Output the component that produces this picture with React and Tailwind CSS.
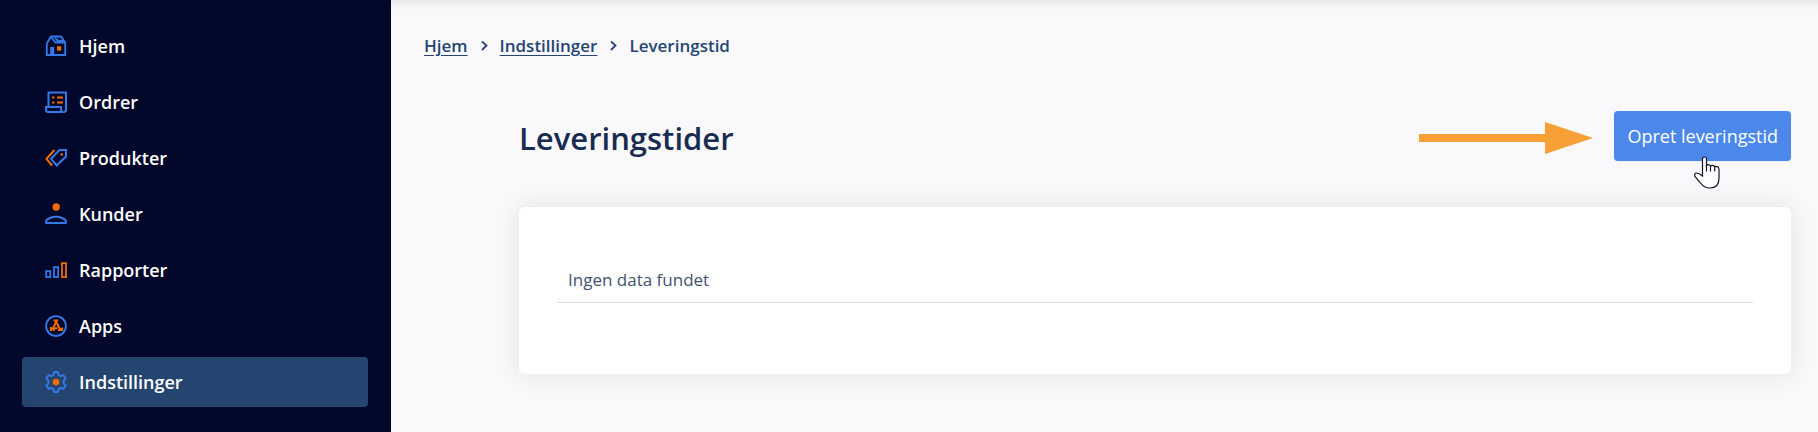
import { Fragment } from "react";

const BLUE = "#3579e8";
const ORANGE = "#f06c00";

function HomeIcon() {
  return (
    <svg width="22" height="22" viewBox="0 0 22 22" fill="none" stroke={BLUE} strokeWidth="1.8">
      <path d="M1.8 8.5V20H20.200V7.500L16 1.500H6L1.800 8.500" />
      <path d="M6 2L10.500 7.500H20M10 2.700L12.600 5.700H18" />
      <path d="M5.2 12H9.200V20H5.200Z" fill={BLUE} stroke="none" />
      <path d="M12 11.200H16.200V15.600H12Z" fill={ORANGE} stroke="none" />
    </svg>
  );
}

function OrdersIcon() {
  return (
    <svg width="22" height="22" viewBox="0 0 22 22" fill="none" stroke={BLUE} strokeWidth="2">
      <path d="M3.500 16V1.500H21V18.500Q21 21 18.500 21" />
      <path d="M1 16H16V18.500Q16 21 18.500 21H3Q1 21 1 18.500Z" />
      <path d="M7 6.500H9.500M12 6.500H18M7 11.500H9.500M12 11.500H18" stroke={ORANGE} strokeWidth="2.200" />
    </svg>
  );
}

function ProductsIcon() {
  return (
    <svg width="22" height="22" viewBox="0 0 22 22" fill="none" strokeWidth="2">
      <path d="M9.500 3L1.500 11.800L7 18.500" stroke={ORANGE} />
      <path d="M21 3H14.500L6 11.800L11.800 18.500L21 9.500Z" stroke={BLUE} />
      <circle cx="16.8" cy="7.5" r="1.3" fill={ORANGE} />
    </svg>
  );
}

function CustomersIcon() {
  return (
    <svg width="22" height="22" viewBox="0 0 22 22" fill="none">
      <circle cx="11.2" cy="4" r="3.7" fill={ORANGE} />
      <path d="M1.200 20V17.500Q5 13.700 11 13.700Q17 13.700 20.800 17.500V20Z" stroke={BLUE} strokeWidth="2" />
    </svg>
  );
}

function ReportsIcon() {
  return (
    <svg width="22" height="22" viewBox="0 0 22 22" fill="none" strokeWidth="1.8">
      <path d="M1.200 12.200H5.300V18.200H1.200Z" stroke={BLUE} />
      <path d="M9 8.200H13.200V18.200H9Z" stroke={BLUE} />
      <path d="M17 4.200H21V18.200H17Z" stroke={ORANGE} />
    </svg>
  );
}

function AppsIcon() {
  return (
    <svg width="22" height="22" viewBox="0 0 22 22" fill="none">
      <circle cx="11" cy="11" r="9.9" stroke={BLUE} strokeWidth="1.8" />
      <g stroke={ORANGE} strokeWidth="2">
        <path d="M12 5L8.500 12.500M8.500 5.500H13M11 7L14 11.500" />
        <path d="M4.800 13.200H12.500M6 12V16M7.500 14.800H10" />
        <path d="M12.500 10.500L16.500 15.500M13 15H17.500M17.200 12.500V15.500" />
      </g>
    </svg>
  );
}

function SettingsIcon() {
  return (
    <svg width="22" height="22" viewBox="0 0 22 22" fill="none">
      <path
        d="M9.200 1H12.800L13.600 3.900L15.600 5L18.500 4.200L20.700 7.500L18.600 9.600V12.400L20.700 14.500L18.500 17.800L15.600 17L13.600 18.100L12.800 21H9.200L8.400 18.100L6.400 17L3.500 17.800L1.300 14.500L3.400 12.400V9.600L1.300 7.500L3.500 4.200L6.400 5L8.400 3.900Z"
        stroke={BLUE}
        strokeWidth="1.9"
        strokeLinejoin="round"
      />
      <circle cx="11" cy="11" r="3.3" fill={ORANGE} />
    </svg>
  );
}

const menu = [
  { label: "Hjem", icon: HomeIcon },
  { label: "Ordrer", icon: OrdersIcon },
  { label: "Produkter", icon: ProductsIcon },
  { label: "Kunder", icon: CustomersIcon },
  { label: "Rapporter", icon: ReportsIcon },
  { label: "Apps", icon: AppsIcon },
  { label: "Indstillinger", icon: SettingsIcon, active: true },
];

const parents = ["Hjem", "Indstillinger"];

export default function App() {
  return (
    <div className="flex min-h-screen bg-[#f9f9fc] font-['Segoe_UI','Open_Sans',sans-serif]">
      <nav className="w-[391px] shrink-0 bg-[#02082b] pl-[22px] pr-[23px] pt-[21px]">
        <ul className="flex flex-col gap-1.5">
          {menu.map(({ label, icon: Icon, active }) => (
            <li key={label}>
              <a
                href="#"
                className={
                  active
                    ? "flex h-[50px] items-center gap-3 rounded bg-[#254571] px-[23px] text-lg font-semibold text-white"
                    : "flex h-[50px] items-center gap-3 rounded px-[23px] text-lg font-semibold text-white"
                }
              >
                <Icon />
                {label}
              </a>
            </li>
          ))}
        </ul>
      </nav>

      <main className="min-w-0 flex-1 shadow-[inset_0_12px_12px_-12px_rgba(0,0,0,0.15)]">
        <nav className="flex h-[91px] items-center gap-3 px-[33px] text-[17px] font-semibold text-[#254573]">
          {parents.map((name) => (
            <Fragment key={name}>
              <a href="#" className="underline underline-offset-3">
                {name}
              </a>
              <svg width="8" height="12" viewBox="0 0 8 12" fill="none" stroke="#254573" strokeWidth="1.8">
                <path d="M2 1.500L6.500 5.500L2 10" />
              </svg>
            </Fragment>
          ))}
          <span>Leveringstid</span>
        </nav>

        <section className="pl-32 pr-[27px] pt-5">
          <div className="flex items-center">
            <h1 className="pt-1 text-[31px] font-semibold text-[#182c50]">Leveringstider</h1>
            <svg className="ml-auto mr-[21px] mt-1" width="174" height="32" viewBox="0 0 174 32" fill="#f89f35">
              <path d="M0 12H126V0L174 16L126 32V20H0Z" />
            </svg>
            <button type="button" className="relative h-[50px] rounded bg-[#4b88e9] px-[13px] text-lg text-white shadow-xs">
              Opret leveringstid
              <svg className="absolute left-20 top-[45px]" width="26" height="33" viewBox="0 0 26 33">
                <path
                  d="M8.500 20V3Q8.500 1 10.500 1Q12.500 1 12.500 3V9.500Q14.500 7.500 16.500 10Q18.500 8.500 20.500 10.500Q25 10 25 13.500V22Q25 32 16 32Q10 32 6.500 27L1 20.500Q0 17 2.500 17Q5 17 8.500 20Z"
                  fill="white"
                  stroke="#12122a"
                  strokeWidth="1.200"
                />
                <path d="M12.500 9V15.500M16.500 10V15.500M20.700 11V15.500" stroke="#12122a" strokeWidth="1.200" />
              </svg>
            </button>
          </div>

          <div className="mt-[45px] rounded-md bg-white px-[38px] pb-[71px] pt-[51px] shadow-[0_0_24px_rgba(0,0,0,0.1)]">
            <table className="w-full border-separate border-spacing-0 text-[17px] text-[#43536f]">
              <tbody>
                <tr>
                  <td className="h-[45px] border-b border-[#dcdddf] px-[11px]">Ingen data fundet</td>
                </tr>
              </tbody>
            </table>
          </div>
        </section>
      </main>
    </div>
  );
}
